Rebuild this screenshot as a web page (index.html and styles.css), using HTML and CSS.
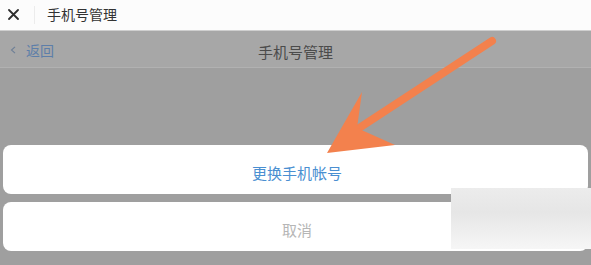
FILE: index.html
```html
<!DOCTYPE html>
<html lang="zh-CN">
<head>
<meta charset="utf-8">
<link rel="stylesheet" href="styles.css">
</head>
<body>
<div class="page">
  <header class="topbar">
    <span class="close">
      <svg width="11" height="11" viewBox="0 0 11 11"><path d="M1 1L10 10M10 1L1 10" stroke="#2e2e2e" stroke-width="1.8" stroke-linecap="round"/></svg>
    </span>
    <span class="divider"></span>
    <span class="top-title">手机号管理</span>
  </header>
  <nav class="navbar">
    <div class="back">
      <svg width="6" height="8" viewBox="0 0 6 8"><path d="M5 0.8L1.5 4L5 7.2" fill="none" stroke="#6d7f96" stroke-width="1.1"/></svg>
      <span class="back-text">返回</span>
    </div>
    <div class="nav-title">手机号管理</div>
  </nav>
  <main class="sheet">
    <div class="card action">更换手机帐号</div>
    <div class="card cancel">取消</div>
  </main>
  <div class="watermark"></div>
  <svg class="arrow" width="591" height="265" viewBox="0 0 591 265">
    <line x1="492" y1="41" x2="350" y2="134" stroke="#f3814d" stroke-width="8" stroke-linecap="round"/>
    <polygon points="327,153 362,92 357,128 395,145" fill="#f3814d"/>
  </svg>
</div>
</body>
</html>
```

FILE: styles.css
```css
* { box-sizing: border-box; }
html, body { margin: 0; padding: 0; }
body {
  background: #9f9f9f;
  font-family: "Noto Sans CJK SC", "Noto Sans", sans-serif;
  width: 591px;
  height: 265px;
  overflow: hidden;
}
.page { position: relative; width: 591px; height: 265px; }
.topbar {
  height: 31px;
  background: #fcfcfc;
  border-bottom: 1px solid #cfcfcf;
  display: flex;
  align-items: center;
  padding-left: 8px;
}
.close { display: flex; width: 11px; height: 11px; margin-top: -2px; }
.divider {
  width: 1px;
  height: 18px;
  background: #ececec;
  margin-left: 15px;
  margin-right: 12px;
}
.top-title {
  font-size: 14px;
  color: #333;
  line-height: 1;
  margin-top: -3px;
}
.navbar {
  position: relative;
  height: 37px;
  background: #a7a7a7;
  border-bottom: 1px solid #b1b1b1;
  display: flex;
  align-items: center;
}
.back {
  display: flex;
  align-items: center;
  padding-left: 10px;
  margin-top: 2px;
}
.back svg { display: block; }
.back-text {
  margin-left: 10px;
  font-size: 14px;
  color: #5d7ea9;
  line-height: 1;
}
.nav-title {
  position: absolute;
  left: 0; right: 0;
  top: 13px;
  text-align: center;
  font-size: 15px;
  line-height: 1;
  color: #4b4b4b;
}
.sheet {
  padding: 77px 3px 0;
  display: flex;
  flex-direction: column;
  gap: 8px;
}
.card {
  height: 49px;
  background: #ffffff;
  border-radius: 8px;
  display: flex;
  align-items: center;
  justify-content: center;
  padding-top: 6px;
  padding-left: 3px;
  font-size: 15px;
}
.action { color: #4a8fd1; }
.cancel { color: #b6b6b6; }
.watermark {
  position: absolute;
  left: 451px;
  top: 188px;
  width: 140px;
  height: 61px;
  background: linear-gradient(180deg, #ececec 0%, #e6e6e6 40%, #f6f6f6 100%);
}
.arrow { position: absolute; left: 0; top: 0; pointer-events: none; }
```
